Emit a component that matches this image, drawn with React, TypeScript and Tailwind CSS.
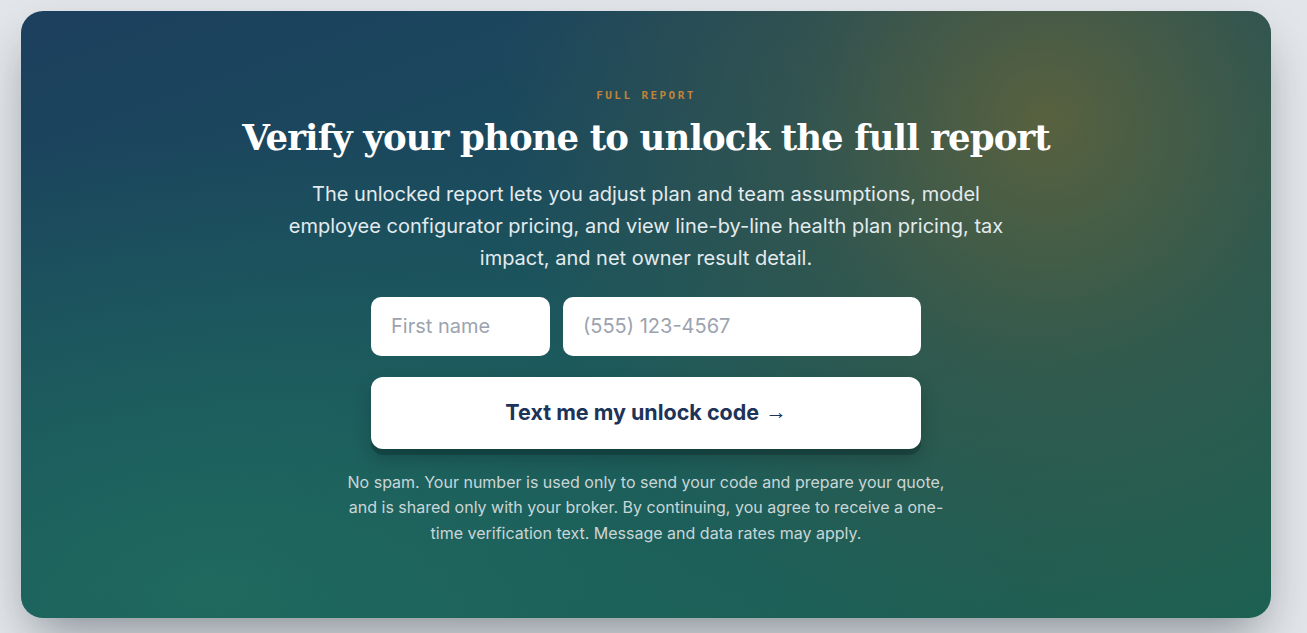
const sans = "font-['Inter','Noto_Sans',sans-serif]";

function Field({ placeholder, className }: { placeholder: string; className: string }) {
  return (
    <input
      className={`h-[59px] rounded-[10px] border border-white/70 bg-white px-[19px] text-[20px] text-slate-800 outline-none placeholder:text-[#9ca3af] ${className}`}
      placeholder={placeholder}
      type="text"
    />
  );
}

export default function App() {
  return (
    <div className={`min-h-[633px] bg-[#e2e5e9] pt-[11px] pl-[21px] ${sans}`}>
      <section className="relative h-[607px] w-[1250px] overflow-hidden rounded-[22px] bg-[linear-gradient(160deg,#1c3f5e_0%,#1a4f5c_45%,#1c6152_100%)] shadow-[0_24px_50px_-12px_rgba(15,30,40,0.45)]">
        {/* soft colour glows */}
        <div className="pointer-events-none absolute inset-0 bg-[radial-gradient(circle_at_82%_18%,rgba(115,105,50,0.7)_0%,rgba(85,95,60,0.38)_22%,transparent_48%)]" />
        <div className="pointer-events-none absolute inset-0 bg-[radial-gradient(ellipse_at_15%_95%,rgba(32,112,96,0.75)_0%,transparent_55%)]" />

        <div className="relative flex flex-col items-center pt-[77px] text-center">
          <p className="font-['DejaVu_Sans_Mono',monospace] text-[11px] font-bold tracking-[0.22em] text-[#c0843a]">
            FULL REPORT
          </p>
          <h1 className="mt-[9px] font-['DejaVu_Serif',serif] text-[35.5px] font-bold leading-[48px] tracking-[-0.025em] text-white">
            Verify your phone to unlock the full report
          </h1>
          <p className="mt-[16px] max-w-[720px] text-[20px] leading-[32px] text-[#e3ebef]">
            The unlocked report lets you adjust plan and team assumptions, model employee configurator pricing, and
            view line-by-line health plan pricing, tax impact, and net owner result detail.
          </p>

          <form className="mt-[23px] flex w-[550px] flex-col gap-[21px]">
            <div className="flex gap-[13px]">
              <Field className="w-[179px]" placeholder="First name" />
              <Field className="flex-1" placeholder="(555) 123-4567" />
            </div>
            <button
              className="flex h-[72px] items-center justify-center rounded-[12px] bg-white text-[21.5px] font-bold text-[#1e3358] shadow-[0_6px_0_rgba(10,40,40,0.35),0_10px_20px_rgba(0,0,0,0.2)]"
              type="button"
            >
              Text me my unlock code
              <span className="ml-[6px] font-['Liberation_Sans',sans-serif] font-normal">→</span>
            </button>
          </form>

          <p className="mt-[21px] max-w-[600px] text-[16px] leading-[25.5px] text-[#c9d6d8]">
            No spam. Your number is used only to send your code and prepare your quote, and is shared only with your
            broker. By continuing, you agree to receive a one-time verification text. Message and data rates may apply.
          </p>
        </div>
      </section>
    </div>
  );
}
